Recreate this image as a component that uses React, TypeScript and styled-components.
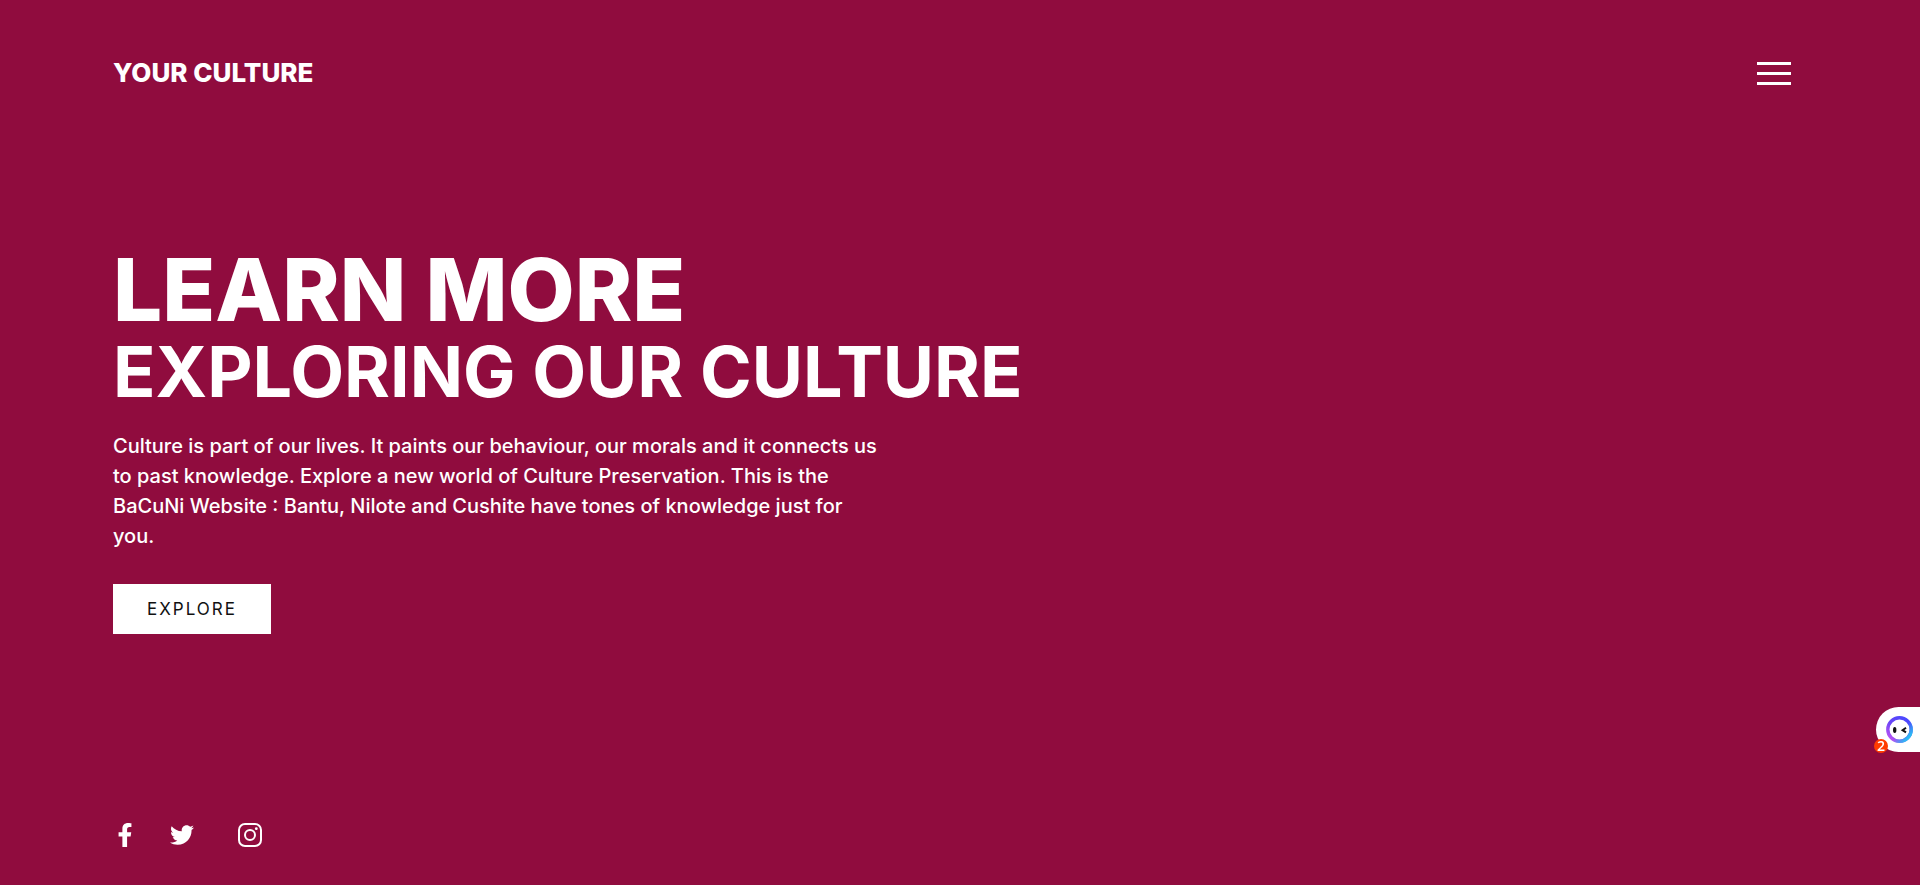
import React from 'react';
import styled, { createGlobalStyle } from 'styled-components';
import { FaFacebookF, FaTwitter } from 'react-icons/fa';

const GlobalStyle = createGlobalStyle`
  *, *::before, *::after { box-sizing: border-box; margin: 0; padding: 0; }
  body {
    margin: 0;
    background: #900c3e;
    color: #fff;
    font-family: Inter, "Open Sans", sans-serif;
  }
`;

const Page = styled.div`
  min-height: 100vh;
  display: flex;
  flex-direction: column;
  padding: 0 129px 0 113px;
`;

const Header = styled.header`
  display: flex;
  align-items: center;
  justify-content: space-between;
  height: 146px;
`;

const Logo = styled.h2`
  font-size: 26px;
  line-height: 40px;
  font-weight: 800;
`;

const MenuButton = styled.button`
  display: flex;
  flex-direction: column;
  gap: 7px;
  border: 0;
  background: none;
  cursor: pointer;
`;

const MenuBar = styled.span`
  width: 34px;
  height: 3px;
  background: #fff;
`;

const Hero = styled.main`
  flex: 1;
  display: flex;
  flex-direction: column;
  align-items: flex-start;
  justify-content: center;
  padding-bottom: 52px;
`;

const Title = styled.h1`
  font-size: 87px;
  line-height: 90px;
  font-weight: 800;
`;

const Subtitle = styled.h2`
  font-size: 70px;
  line-height: 74px;
  font-weight: 700;
`;

const Description = styled.p`
  max-width: 820px;
  margin: 22px 0 33px;
  font-size: 20px;
  font-weight: 500;
  line-height: 30px;
`;

const ExploreButton = styled.button`
  height: 50px;
  padding: 0 34px;
  border: 0;
  background: #fff;
  color: #111;
  font-family: inherit;
  font-size: 17px;
  letter-spacing: 2px;
  text-transform: uppercase;
  cursor: pointer;
`;

const Footer = styled.footer`
  display: flex;
  align-items: center;
  gap: 33px;
  height: 100px;
`;

const SocialLink = styled.a<{ $space?: number }>`
  display: flex;
  margin-right: ${({ $space = 0 }) => $space}px;
  color: #fff;
`;

const Assistant = styled.button`
  position: fixed;
  right: 0;
  bottom: 133px;
  width: 44px;
  height: 45px;
  padding-left: 10px;
  display: flex;
  align-items: center;
  border: 0;
  border-radius: 23px 0 0 23px;
  background: #fff;
  cursor: pointer;
`;

const Badge = styled.span`
  position: absolute;
  left: -2px;
  bottom: -1px;
  width: 14px;
  height: 14px;
  border-radius: 7px;
  background: #ff3c00;
  color: #fff;
  font-family: "Open Sans", sans-serif;
  font-size: 14px;
  font-weight: 600;
  line-height: 14px;
  text-align: center;
`;

const AssistantIcon = () => (
  <svg width="27" height="27" viewBox="0 0 27 27" fill="none" aria-hidden="true">
    <defs>
      <linearGradient id="ring" x1="5" y1="23" x2="22" y2="4" gradientUnits="userSpaceOnUse">
        <stop offset="0" stopColor="#b452f5" />
        <stop offset="0.45" stopColor="#6a45f5" />
        <stop offset="1" stopColor="#4a48ff" />
      </linearGradient>
      <linearGradient id="glow" x1="14" y1="16" x2="22" y2="23" gradientUnits="userSpaceOnUse">
        <stop offset="0" stopColor="#27c3f3" stopOpacity="0" />
        <stop offset="1" stopColor="#27c3f3" />
      </linearGradient>
    </defs>
    <circle cx="13.500" cy="13.500" r="11.700" stroke="url(#ring)" strokeWidth="3.400" />
    <circle cx="13.500" cy="13.500" r="11.700" stroke="url(#glow)" strokeWidth="3.400" />
    <ellipse cx="8.700" cy="14" rx="1.700" ry="3" fill="#111" />
    <path d="M20 11.800l-3.400 2.400 3.400 2.200" stroke="#111" strokeWidth="2" />
  </svg>
);

const InstagramIcon = () => (
  <svg width="24" height="24" viewBox="0 0 24 24" fill="none" stroke="#fff" aria-hidden="true">
    <rect x="1" y="1" width="22" height="22" rx="6" strokeWidth="2" />
    <circle cx="12" cy="12" r="5" strokeWidth="2" />
    <circle cx="18.300" cy="5.700" r="1.400" fill="#fff" stroke="none" />
  </svg>
);

export default function App() {
  return (
    <>
      <GlobalStyle />
      <Page>
        <Header>
          <Logo>YOUR CULTURE</Logo>
          <MenuButton type="button" aria-label="Open menu">
            <MenuBar />
            <MenuBar />
            <MenuBar />
          </MenuButton>
        </Header>
        <Hero>
          <Title>LEARN MORE</Title>
          <Subtitle>EXPLORING OUR CULTURE</Subtitle>
          <Description>
            Culture is part of our lives. It paints our behaviour, our morals and it connects us
            <br />
            to past knowledge. Explore a new world of Culture Preservation. This is the
            <br />
            BaCuNi Website : Bantu, Nilote and Cushite have tones of knowledge just for
            <br />
            you.
          </Description>
          <ExploreButton type="button">Explore</ExploreButton>
        </Hero>
        <Footer>
          <SocialLink href="#facebook" aria-label="Facebook">
            <FaFacebookF size={24} />
          </SocialLink>
          <SocialLink href="#twitter" aria-label="Twitter" $space={11}>
            <FaTwitter size={24} />
          </SocialLink>
          <SocialLink href="#instagram" aria-label="Instagram">
            <InstagramIcon />
          </SocialLink>
        </Footer>
      </Page>
      <Assistant type="button" aria-label="Open assistant, 2 notifications">
        <AssistantIcon />
        <Badge>2</Badge>
      </Assistant>
    </>
  );
}
